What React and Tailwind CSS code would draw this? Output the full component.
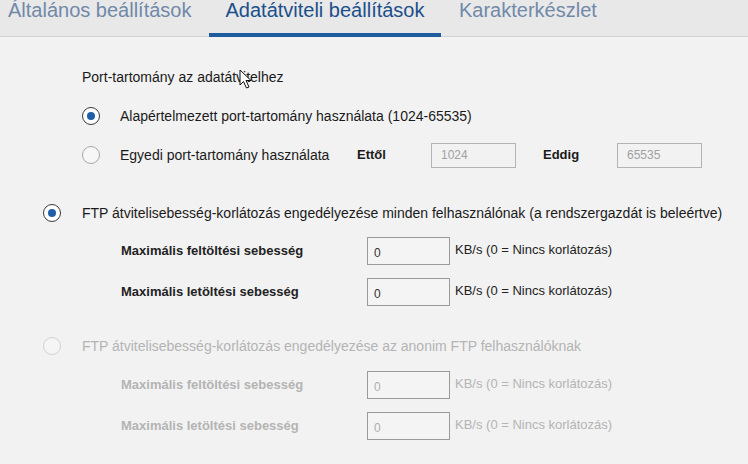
import React from "react";

const Radio = ({ checked, disabled }) => {
  if (checked) {
    return (
      <span className="w-[18px] h-[18px] rounded-full border-[1.5px] border-[#3a3a3a] bg-white flex items-center justify-center shrink-0">
        <span className="w-[8px] h-[8px] rounded-full bg-[#1f5ea8]" />
      </span>
    );
  }
  return (
    <span
      className={
        "w-[18px] h-[18px] rounded-full border shrink-0 " +
        (disabled ? "border-[#d2d2d2] bg-[#f5f5f5]" : "border-[#a8a8a8] bg-[#f7f7f7]")
      }
    />
  );
};

const SpeedRow = ({ label, disabled, className }) => (
  <div className={"flex items-center h-[28px] pl-[121px] " + className}>
    <span
      className={
        "w-[246px] font-bold text-[13px] " +
        (disabled ? "text-[#b4b4b4]" : "text-[#222]")
      }
    >
      {label}
    </span>
    <div
      className={
        "w-[83px] h-[28px] border bg-[#f4f4f4] pl-[6px] pt-[3px] flex items-center text-[12px] " +
        (disabled ? "border-[#9a9a9a] text-[#b0b0b0]" : "border-[#9a9a9a] text-[#333]")
      }
    >
      0
    </div>
    <span
      className={
        "ml-[5px] -mt-[3px] text-[13px] " +
        (disabled ? "text-[#b4b4b4]" : "text-[#222]")
      }
    >
      KB/s (0 = Nincs korlátozás)
    </span>
  </div>
);

const Cursor = () => (
  <svg
    className="absolute left-[239px] top-[69px]"
    width="14"
    height="21"
    viewBox="0 0 14 21"
  >
    <path
      d="M1 1 L1 16 L4.5 12.5 L7.5 19 L10 18 L7 11.5 L12 11.5 Z"
      fill="#fff"
      stroke="#111"
      strokeWidth="1"
      strokeLinejoin="round"
    />
  </svg>
);

export default function App() {
  return (
    <div
      className="relative w-[748px] h-[464px] overflow-hidden bg-[#f2f2f2] text-[#1a1a1a]"
      style={{ fontFamily: '"Liberation Sans", Arial, sans-serif' }}
    >
      {/* tabs */}
      <div className="flex h-[37px] bg-[#e8e8e8] border-b border-[#d2d2d2] text-[20px] leading-[21px] whitespace-nowrap">
        <div className="w-[209px] pl-[8px] text-[#7189a9]">Általános beállítások</div>
        <div className="w-[232px] h-[37px] border-b-4 border-[#1f5c9e] text-[#1b4f8c] text-center">
          Adatátviteli beállítások
        </div>
        <div className="pl-[18px] text-[#7189a9]">Karakterkészlet</div>
      </div>

      {/* port range */}
      <div className="flex items-center h-[20px] mt-[30px] pl-[82px] text-[14px]">
        Port-tartomány az adatátvitelhez
      </div>
      <div className="flex items-center h-[26px] mt-[16px] pl-[82px] text-[14px]">
        <Radio checked />
        <span className="ml-[20px]">Alapértelmezett port-tartomány használata (1024-65535)</span>
      </div>
      <div className="flex items-center h-[26px] mt-[13px] pl-[82px] text-[14px]">
        <Radio />
        <span className="ml-[20px] w-[237px]">Egyedi port-tartomány használata</span>
        <span className="w-[74px] font-bold text-[13px]">Ettől</span>
        <div className="w-[85px] h-[25px] border border-[#b4b4b4] pl-[9px] flex items-center text-[12px] text-[#a0a0a0]">
          1024
        </div>
        <span className="ml-[27px] w-[74px] font-bold text-[13px]">Eddig</span>
        <div className="w-[85px] h-[25px] border border-[#b4b4b4] pl-[9px] flex items-center text-[12px] text-[#a0a0a0]">
          65535
        </div>
      </div>

      {/* all users */}
      <div className="flex items-center h-[26px] mt-[32px] pl-[43px] text-[14px]">
        <Radio checked />
        <span className="ml-[21px] whitespace-nowrap">
          FTP átvitelisebesség-korlátozás engedélyezése minden felhasználónak (a rendszergazdát is beleértve)
        </span>
      </div>
      <SpeedRow label="Maximális feltöltési sebesség" className="mt-[11px]" />
      <SpeedRow label="Maximális letöltési sebesség" className="mt-[13px]" />

      {/* anonymous */}
      <div className="flex items-center h-[26px] mt-[27px] pl-[43px] text-[14px] text-[#b4b4b4]">
        <Radio disabled />
        <span className="ml-[21px] whitespace-nowrap">
          FTP átvitelisebesség-korlátozás engedélyezése az anonim FTP felhasználóknak
        </span>
      </div>
      <SpeedRow label="Maximális feltöltési sebesség" disabled className="mt-[12px]" />
      <SpeedRow label="Maximális letöltési sebesség" disabled className="mt-[13px]" />

      <Cursor />
    </div>
  );
}
